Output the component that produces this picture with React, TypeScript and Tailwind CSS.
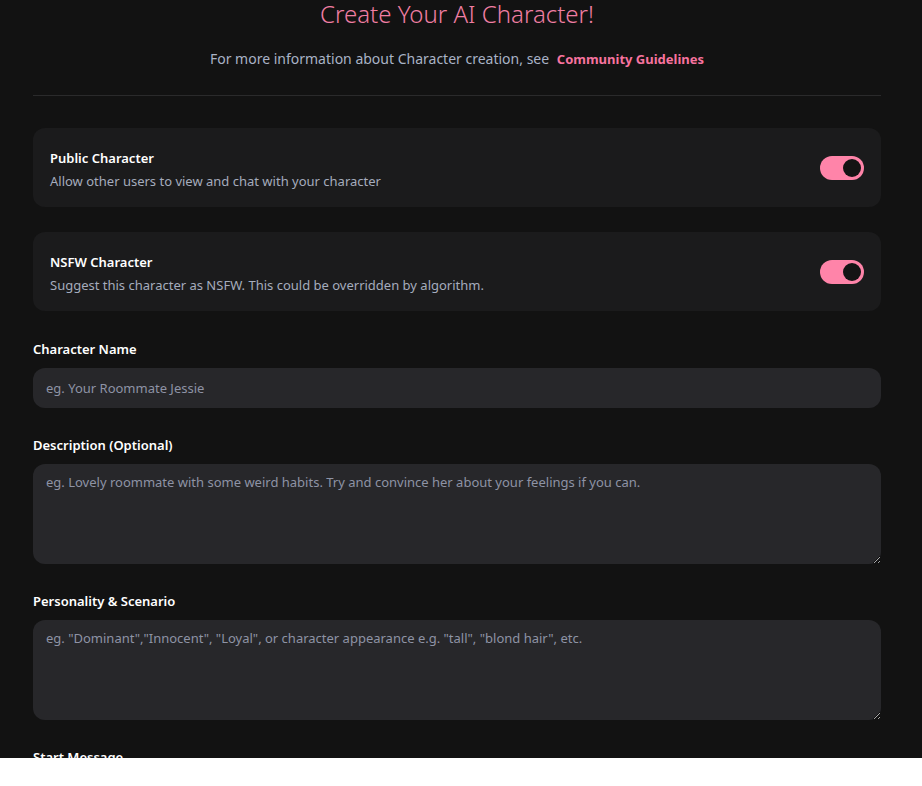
import { useState } from "react";

function Toggle({ on, onChange }: { on: boolean; onChange: () => void }) {
  return (
    <button
      type="button"
      onClick={onChange}
      className={`flex h-6 w-11 shrink-0 items-center rounded-full px-[3px] ${
        on ? "justify-end bg-[#ff84a9]" : "justify-start bg-[#3a3a3f]"
      }`}
    >
      <span className="h-[18px] w-[18px] rounded-full bg-[#141414]" />
    </button>
  );
}

function SettingCard({
  title,
  body,
  on,
  onChange,
}: {
  title: string;
  body: string;
  on: boolean;
  onChange: () => void;
}) {
  return (
    <div className="flex items-center justify-between rounded-xl bg-[#1b1b1c] px-[17px] pb-[16px] pt-[20px]">
      <div className="space-y-[3px]">
        <div className="text-[13px] font-semibold leading-5 text-white">{title}</div>
        <div className="text-[13px] leading-5 text-[#a5acbd]">{body}</div>
      </div>
      <div className="-mt-[3px]">
        <Toggle on={on} onChange={onChange} />
      </div>
    </div>
  );
}

function Label({ children }: { children: string }) {
  return <div className="mb-[9px] text-[13px] font-semibold leading-5 text-white">{children}</div>;
}

export default function App() {
  const [isPublic, setIsPublic] = useState(true);
  const [nsfw, setNsfw] = useState(true);

  const field =
    "w-full rounded-xl bg-[#27272a] px-[13px] text-[13px] text-white placeholder:text-[#8e93a5] outline-none";

  return (
    <div
      className="h-[758px] overflow-hidden bg-[#121212] pl-[33px] pr-[41px]"
      style={{ fontFamily: '"Noto Sans", "Open Sans", sans-serif', colorScheme: "dark" }}
    >
      <h1 className="pt-0 text-center text-[24px] font-light leading-7 text-[#f07ea3]">
        Create Your AI Character!
      </h1>
      <p className="mt-[21px] text-center text-[14px] leading-5 text-[#a9b3c6]">
        For more information about Character creation, see{" "}
        <a href="#" className="ml-1 text-[13px] font-bold text-[#f7739f]">
          Community Guidelines
        </a>
      </p>
      <div className="mt-[26px] border-t border-[#2a2a2b]" />

      <div className="mt-[32px] space-y-[25px]">
        <SettingCard
          title="Public Character"
          body="Allow other users to view and chat with your character"
          on={isPublic}
          onChange={() => setIsPublic(!isPublic)}
        />
        <SettingCard
          title="NSFW Character"
          body="Suggest this character as NSFW. This could be overridden by algorithm."
          on={nsfw}
          onChange={() => setNsfw(!nsfw)}
        />
      </div>

      <div className="mt-[28px]">
        <Label>Character Name</Label>
        <input className={`${field} h-10`} placeholder="eg. Your Roommate Jessie" />
      </div>

      <div className="mt-[27px]">
        <Label>Description (Optional)</Label>
        <textarea
          className={`${field} block h-[100px] resize-y py-[9px]`}
          placeholder="eg. Lovely roommate with some weird habits. Try and convince her about your feelings if you can."
        />
      </div>

      <div className="mt-[27px]">
        <Label>Personality &amp; Scenario</Label>
        <textarea
          className={`${field} block h-[100px] resize-y py-[9px]`}
          placeholder={'eg. "Dominant","Innocent", "Loyal", or character appearance e.g. "tall", "blond hair", etc.'}
        />
      </div>

      <div className="mt-[27px]">
        <Label>Start Message</Label>
      </div>
    </div>
  );
}
